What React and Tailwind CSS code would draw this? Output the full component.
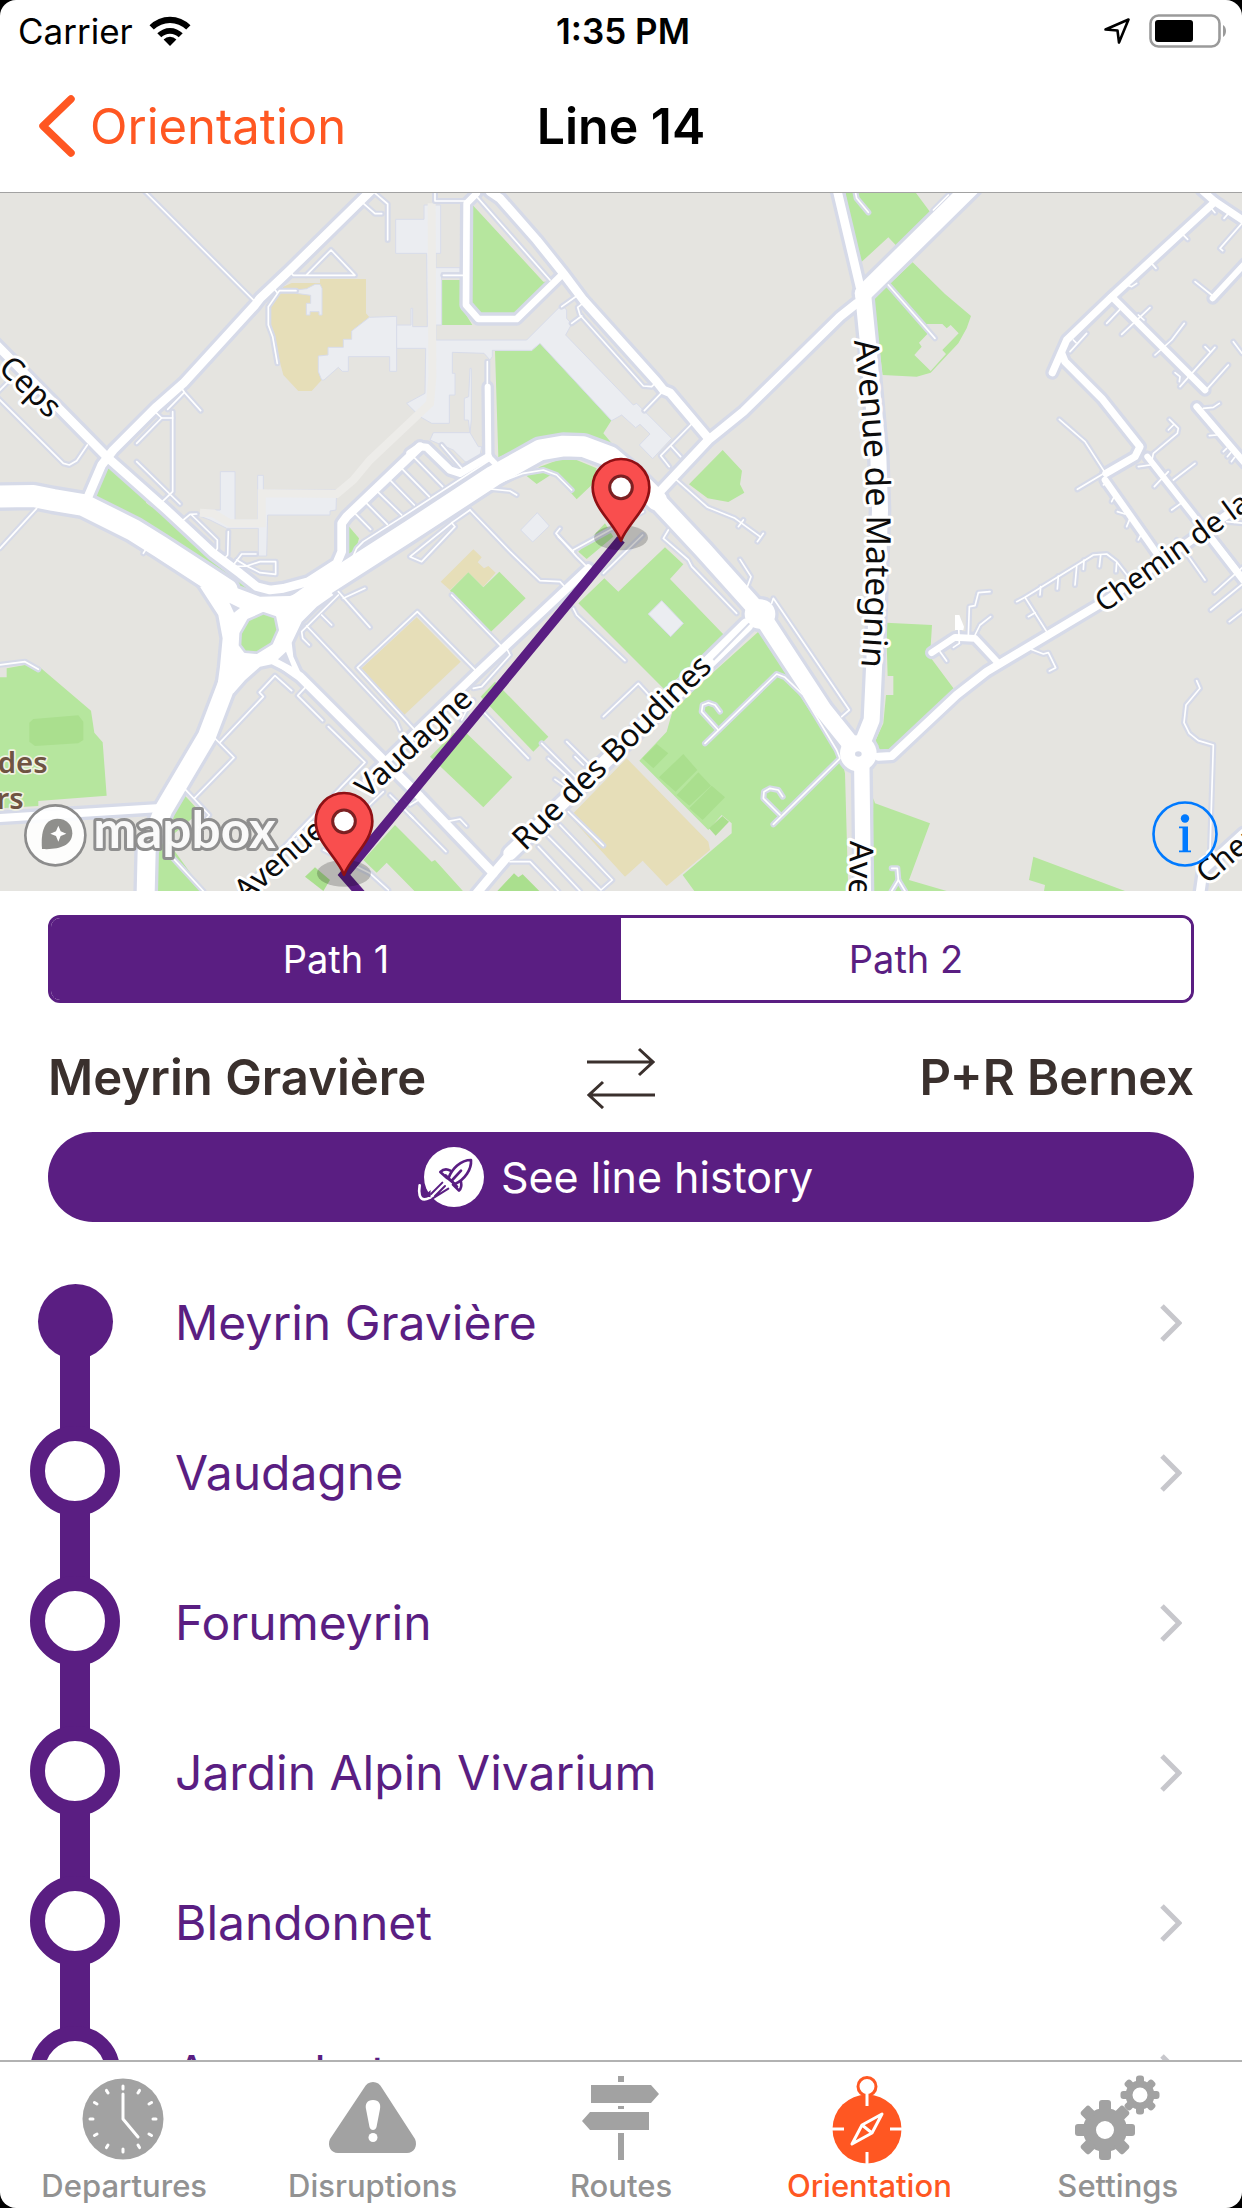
import React, { useState } from "react";

const PURPLE = "#5a1e82";

/* Map sectors: each has its own origin; coordinates inside are local to it.
   Roads are [width, points]; thin service roads are plain point strings. */
const SECTORS = [
  {
    at: [0, 0],
    sand: ["850,290 875,279 960,279 960,267 1098,267 1098,370 1108,382 1055,423 1055,448 1030,448 1030,472 984,472 984,495 955,498 955,545 965,570 935,603 895,603 850,555 830,480 813,420 813,350 840,310"],
    green: [
      "335,827 352,832 445,920 438,938 456,952 468,945 605,1085 700,1165 780,1215 690,1185 620,1145 530,1075 282,922 315,840",
      "1043,1005 1077,1045 1060,1110 1030,1130",
    ],
    building: [
      "1190,379 1108,382 1055,423 1055,448 1030,448 1030,472 984,472 984,495 955,498 955,545 965,570 972,570 1015,532 1027,544 1045,544 1045,500 1169,500 1169,544 1190,544",
      "888,300 920,296 945,283 960,283 966,295 966,375 957,375 957,365 930,365 930,375 919,375 919,340 932,340 932,316 888,310",
      "661,845 705,845 705,990 773,990 773,856 790,856 790,900 1010,900 1008,960 990,963 990,975 803,975 800,1098 775,1098 775,1015 680,1015 630,990 590,975 620,960 661,960",
    ],
    roads: [
      [66, "-20,920 100,918 160,930 250,945 400,1020 480,1070 680,1200"],
      [26, "1115,0 870,240 780,325 765,345 550,580 470,650 340,780 305,825 260,930"],
      [26, "-20,455 320,800 500,960 640,1090 720,1150 770,1190 810,1200 850,1195 925,1175 1010,1120 1025,1085 1025,1000 1040,980 1260,770"],
    ],
    lanes: [
      "435,5 765,335", "1120,5 1163,42 1163,150", "1090,40 1125,71 1145,71", "870,245 880,256 1065,256 993,180 918,256",
      "888,302 838,302 805,350 805,405 818,440 832,520", "820,293 832,308", "545,595 553,607 602,662", "553,607 503,658",
      "465,665 485,684 518,684", "485,684 410,760", "518,665 518,905 487,935", "410,815 540,942",
      "-5,625 190,820 208,825 230,812 262,765", "-5,605 25,575", "0,1075 110,955", "550,990 570,973 590,972",
      "575,975 652,1050 652,1075 640,1095", "685,1025 683,1095 665,1115", "1065,970 1112,1018", "1100,940 1162,1003",
      "1135,907 1205,975", "1170,870 1243,945", "1205,835 1288,920", "1240,800 1328,890",
      "1050,1120 1070,1075 1090,1055 1200,985 1470,810",
    ],
  },
  {
    at: [1230, 0],
    green: [
      "185,42 400,275 410,275 325,375 200,375 182,350",
      "95,270 150,270 150,345 187,405 95,405",
      "255,483 365,483 390,460 605,690 580,730 607,762 520,735 460,730 385,750 265,802",
      "390,830 450,808 500,810 560,835 545,885 500,928 430,850 380,882 350,858",
      "837,883 938,780 996,842 990,883 1003,908 955,936 893,925",
      "505,1085 530,1107 610,1040 585,1000",
    ],
    building: [
      "42,45 92,45 92,190 78,190 78,233 150,233 150,248 95,248 95,405 78,405 78,450 350,450 455,345 470,360 470,385 485,402 467,435 670,645 680,640 785,745 728,806 688,765 720,732 690,703 677,713 635,675 605,692 390,460 365,481 247,481 247,500 240,510 222,490 127,487 127,550 135,550 135,615 118,615 118,700 65,700 30,680 -10,640 45,610 47,475 -40,475 -40,405 3,405 3,355 8,355 8,410 52,410 50,190 -43,190 -43,88 42,88",
      "70,728 180,728 205,770 215,770 210,795 185,820 165,815 130,780 60,750",
      "180,535 184,535 184,690 180,728 175,690 163,690 163,625 176,620",
      "332,1020 382,968 418,1008 368,1056",
    ],
    roads: [
      [62, "-360,1260 -270,1195 0,1022 250,858 390,780 460,768 520,770 600,800 660,850 740,930"],
      [52, "640,830 740,930 880,1080 1050,1270 1240,1560 1345,1690"],
      [20, "200,10 170,40 168,345 205,387 320,387 455,255"],
      [26, "240,5 270,25 380,150 460,250 520,330 740,575 760,600 780,608 895,745"],
      [26, "1340,340 1290,380 1000,665 895,750 745,910"],
      [18, "233,590 235,800 260,825"],
      [22, "0,790 30,770 50,772 120,840 150,850 235,800"],
    ],
    lanes: [
      "75,5 75,33 165,33", "100,256 160,256", "200,20 420,270", "455,350 500,318", "525,335 503,352 510,375 700,588 725,590 740,575",
      "485,400 515,378", "755,608 703,662", "845,702 752,797 778,830", "783,768 812,800", "232,515 232,590", "95,765 160,840",
      "235,890 340,850 400,840 440,855 485,900", "240,897 300,903 320,915", "798,868 893,952 975,985 1050,1040", "1060,1030 1042,1055",
      "1000,990 985,1010", "180,960 300,1085 390,1172 450,1175 462,1188", "180,960 130,995 0,1100 35,1115 135,1010 125,998",
      "450,1015 438,1030 500,1100 530,1130", "700,965 490,1080", "698,1035 580,1150", "775,1020 760,1045 835,1110 845,1130 980,1270",
    ],
  },
  {
    at: [2460, 0],
    green: [
      "75,5 285,5 332,68 230,168 205,142 120,220",
      "278,217 375,312 453,378 440,415 415,460 332,548 290,560 188,555 160,330 200,290",
    ],
    cut: ["320,402 367,402 380,415 392,405 416,430 367,480 378,492 332,543 283,495 305,470 297,458 322,432"],
    roads: [
      [52, "455,-10 130,310"],
      [26, "50,-5 120,290"],
      [48, "130,320 145,470 175,800 180,960 170,1260 155,1590 115,1690"],
      [46, "125,1700 130,2110"],
      [22, "1145,0 1185,35 1275,95"],
      [22, "1185,35 870,325 740,450 697,548"],
      [22, "725,490 735,515 845,625 960,770 945,800 858,850"],
      [20, "855,870 1010,1090"],
      [20, "875,320 1155,600"],
      [20, "1130,650 1275,820"],
      [18, "982,800 1280,1180"],
      [18, "1275,220 1178,325"],
    ],
    lanes: [
      "860,400 900,358", "905,433 990,353", "955,375 972,390", "1005,495 1055,450 1093,400", "1080,590 1185,472", "1155,470 1170,485",
      "1065,548 1080,560 1078,575", "1160,598 1225,525", "990,215 1008,235", "1085,130 1103,148", "920,285 935,290 950,280",
      "1170,50 1185,68", "1212,85 1225,70", "1270,95 1200,175 1208,182", "1125,275 1175,315", "750,485 800,430", "760,450 768,458",
      "718,688 795,755 855,848 772,898", "1240,455 1266,490", "1150,655 1180,652 1198,640", "1168,737 1190,735",
      "1048,688 1075,715 1072,730 1000,790 997,805", "1045,720 1060,705", "955,830 990,825", "1003,890 1045,845", "1060,870 1125,820",
      "1055,960 1090,935", "850,885 860,880", "875,935 885,915", "892,965 915,972", "920,1010 930,985", "955,1050 965,1030",
      "1210,785 1220,775", "1222,800 1232,788", "1234,815 1244,802", "1220,995 1270,1000", "105,0 110,25 145,67", "340,60 385,15", "205,285 345,445",
    ],
  },
  {
    at: [0, 1050],
    sand: ["1250,232 1382,365 1210,527 1085,385"],
    green: [
      "-5,412 20,412 20,385 75,375 118,380 273,512 283,578 308,607 320,767 115,783 115,798 -5,805",
      "550,762 600,815 500,900 615,1060 460,1060 455,950 510,850",
      "1185,855 1295,965 1305,960 1395,1060 1250,1060 1160,968 1130,998 1090,960",
    ],
    dark: [
      "100,537 235,526 250,545 250,600 235,610 105,618 88,605 88,548",
      "945,982 990,1020 970,1053 915,1010",
    ],
    junction: "600,140 700,140 780,170 870,168 970,130 1000,165 950,200 905,245 875,308 880,350 905,405 890,410 815,373 780,380 735,420 700,460 650,455 660,380 668,295 655,225",
    roads: [
      [54, "685,420 620,590 490,810 440,930 437,1060"],
      [24, "-20,835 470,805"],
      [26, "850,375 900,410 1260,770 1480,1000"],
    ],
    lanes: [
      "-5,375 75,365 115,388", "430,40 440,25", "700,75 725,42 768,42", "690,80 740,78 780,65 827,65 827,103 780,98 740,78 710,60",
      "1015,155 1110,262", "1030,175 1095,145", "1015,165 905,275 908,295 928,315", "965,225 995,255", "920,258 1190,545 1200,570",
      "1430,395 1252,215 1072,383 1240,565", "875,452 825,407 778,457 790,470 660,607", "635,585 702,653 583,775", "553,745 628,825 590,870",
      "918,440 893,467 968,542", "985,560 1095,667 880,890", "1150,755 1050,850", "720,1055 940,830", "890,895 770,1010",
      "1170,765 1240,835", "515,950 610,1053", "970,930 1110,1000 1165,1050",
    ],
  },
  {
    at: [1230, 1050],
    sand: [
      "92,125 190,28 215,52 203,67 222,85 235,78 257,98 220,140 175,97 120,150",
      "650,655 895,905 900,930 770,1038 698,962 645,1010 480,830",
    ],
    green: [
      "120,152 175,97 220,142 268,95 347,175 243,275",
      "212,470 255,425 415,590 370,635",
      "60,650 130,580 165,575 307,712 220,802",
      "505,190 583,115 625,155 765,22 820,73 780,117 942,285 765,450",
      "1045,275 1130,400 1290,640 1305,700 1315,1060 858,1060 818,1005 965,880 965,850 935,825 895,870 688,662 770,575 790,505",
    ],
    dark: [
      "740,612 775,640 730,685 697,655", "820,642 862,690 797,755 747,712", "865,697 903,737 838,797 800,765",
      "905,737 945,772 878,840 838,805", "937,828 957,845 917,887 897,865", "312,1000 325,1012 338,1003 388,1053 262,1053",
    ],
    building: ["755,182 820,250 782,290 715,222"],
    roads: [
      [24, "535,85 200,400 -130,720"],
      [40, "1010,255 790,470 560,690 300,940"],
      [26, "310,930 250,1000 200,1060"],
      [88, "1048,222 1052,222"],
      [104, "1342,1690 1344,1690"],
    ],
    lanes: [
      "125,165 275,320", "490,205 500,225 645,362", "580,530 685,430 740,490", "470,605 545,680", "495,650 520,675", "395,610 500,715",
      "415,655 480,715", "435,718 480,750", "215,510 355,655", "155,540 175,500 190,480", "190,445 215,440 300,345 290,325", "0,795 25,780",
      "0,825 108,935", "110,845 150,837 170,858", "475,815 580,917", "450,855 607,1020 573,1050 415,890", "385,920 510,1053",
      "300,965 360,965 445,1053", "1085,190 1090,175 1318,510 1295,530", "990,58 1023,110 1012,140",
      "885,610 1100,402 1125,412 1180,465 1280,630 1290,655 1090,853", "925,570 875,515 878,495 895,488 915,495 930,515",
      "1110,825 1060,775 1062,755 1080,745 1105,750 1118,770", "490,35 445,-10",
    ],
  },
  {
    at: [2460, 1050],
    green: [
      "198,248 336,255 330,350 402,447 205,635 180,630 165,605 190,550 198,465 220,465 220,408 203,408",
      "160,775 165,790 330,850 267,1020 380,1053 155,1053",
      "640,950 915,1053 672,1053 675,1035 627,1020",
    ],
    roads: [
      [108, "114,640 116,640"],
      [24, "175,650 215,648 410,465 500,395 860,180 1270,-110"],
      [20, "335,338 405,292 465,295 535,370"],
      [22, "1170,-10 1270,120"],
      [26, "1140,1060 1150,990 1270,880"],
    ],
    lanes: [
      "445,285 448,200 465,197 475,158 510,155", "465,285 480,255 512,230", "360,335 380,363", "400,322 418,310 415,240", "590,185 615,172 820,45 860,42 890,65 925,110",
      "615,172 680,275", "625,230 645,218", "660,165 662,140", "712,147 715,108", "765,135 770,80", "790,88 792,60", "838,80 842,45",
      "888,95 890,68", "625,325 670,342 685,338 707,383 688,393", "1130,422 1140,445 1098,495 1092,548 1108,580 1135,602 1180,615 1170,930",
      "1070,0 1155,120", "1183,158 1270,80", "1172,210 1270,130", "1228,245 1270,212", "215,985 232,985 235,1020 215,1053", "235,1020 255,1053",
    ],
  },
];

function Layer({ draw }) {
  return SECTORS.map((s, i) => (
    <g key={i} transform={`translate(${s.at[0]} ${s.at[1]})`}>{draw(s)}</g>
  ));
}

const polys = (list, props) => (list || []).map((p) => <polygon key={p} points={p} {...props} />);
const lines = (list, width) => (list || []).map((p) => <polyline key={p} points={p} strokeWidth={width} />);

const LABELS = [
  { id: "mategnin", d: "M2562,452 Q2628,960 2578,1500", text: "Avenue de Mategnin", size: 101 },
  { id: "ave", d: "M2550,1952 L2542,2400", text: "Avenue", size: 98 },
  { id: "boudines", d: "M1575,1985 L1985,1586 L2160,1415", text: "Rue des Boudines", size: 94 },
  { id: "vaudagne", d: "M736,2138 L1120,1812 L1460,1500", text: "Avenue de Vaudagne", size: 92 },
  { id: "chemin", d: "M3312,1270 L3587,1075 L3900,846", text: "Chemin de la", size: 89 },
  { id: "chene", d: "M3622,2085 L3900,1850", text: "Chemin", size: 92 },
  { id: "ceps", d: "M-8,538 L300,838", text: "Ceps", size: 94 },
];

function Pin({ x, y }) {
  return (
    <g transform={`translate(${x} ${y})`}>
      <path d="M0,160 C-22,105 -85,62 -85,0 A85,85 0 0 1 85,0 C85,62 22,105 0,160 Z" fill="#f94e4e" stroke="#8f1014" strokeWidth="8" strokeLinejoin="round" />
      <circle r="34" fill="#fff" stroke="#7c2022" strokeWidth="9" />
    </g>
  );
}

function MapView() {
  return (
    <section aria-label="Map" className="relative border-t border-[#a2a2a2]">
      <svg viewBox="0 9 3726 2094" className="block h-auto w-full">
        <rect width="3726" height="2110" fill="#e5e4e0" />
        <Layer draw={(s) => (
          <>
            {polys(s.sand, { fill: "#e6deb8" })}
            {polys(s.green, { fill: "#b6e69e" })}
            {polys(s.dark, { fill: "#aadf8e" })}
            {polys(s.cut, { fill: "#e5e4e0" })}
          </>
        )} />
        <Layer draw={(s) => polys(s.building, { fill: "#ebedf1", stroke: "#d8dcea", strokeWidth: 3 })} />
        <polyline points="600,968 640,970 690,1000 785,1000 785,910 1010,912 1060,870 1110,810 1290,640 1297,560 1295,40" fill="none" stroke="#edece9" strokeWidth="24" />
        <g fill="none" stroke="#d6dae8" strokeLinecap="round" strokeLinejoin="round">
          <Layer draw={(s) => lines(s.lanes, 18)} />
          <Layer draw={(s) => (
            <>
              {s.junction && <polygon points={s.junction} strokeWidth="20" />}
              {s.roads.map(([w, p]) => <polyline key={p} points={p} strokeWidth={w + 20} />)}
            </>
          )} />
        </g>
        <g fill="none" stroke="#fff" strokeLinecap="round" strokeLinejoin="round">
          <Layer draw={(s) => lines(s.lanes, 5)} />
          <Layer draw={(s) => (
            <>
              {s.junction && <polygon points={s.junction} fill="#fff" stroke="none" />}
              {s.roads.map(([w, p]) => <polyline key={p} points={p} strokeWidth={w} />)}
            </>
          )} />
        </g>
        <g fill="#d6dae8">
          <polygon points="790,1270 825,1282 833,1320 815,1360 770,1388 735,1385 720,1365 722,1330 745,1290" fill="#b6e69e" stroke="#d6dae8" strokeWidth="8" strokeLinejoin="round" />
          <polygon points="688,1238 720,1254 702,1268" />
          <polygon points="858,1385 876,1430 834,1408" />
          <ellipse cx="2575" cy="1692" rx="10" ry="8" />
          <polyline points="2248,1300 2140,1410" fill="none" stroke="#d6dae8" strokeWidth="6" />
          <polygon points="2865,1275 2878,1275 2892,1310 2890,1320 2865,1320" fill="#fff" />
        </g>

        <g fontFamily="'Noto Sans', sans-serif" fill="#0c0c0c" stroke="#fff" strokeWidth="18" strokeLinejoin="round" paintOrder="stroke">
          {LABELS.map((l) => (
            <React.Fragment key={l.id}>
              <path id={l.id} d={l.d} fill="none" stroke="none" />
              <text fontSize={l.size}><textPath href={`#${l.id}`}>{l.text}</textPath></text>
            </React.Fragment>
          ))}
        </g>
        <g fontFamily="'Noto Sans', sans-serif" fontSize="88" fontWeight="600" fill="#6f5442" stroke="#f1f3e4" strokeWidth="10" strokeLinejoin="round" paintOrder="stroke" textAnchor="end">
          <text x="143" y="1748">des</text>
          <text x="71" y="1858">rs</text>
        </g>

        <polyline points="1863,1048 1032,2055 1085,2115" fill="none" stroke={PURPLE} strokeWidth="29" />
        <g fill="#000" opacity="0.2">
          <ellipse cx="1863" cy="1043" rx="81" ry="38" />
          <ellipse cx="1032" cy="2050" rx="81" ry="40" />
        </g>
        <Pin x={1863} y={892} />
        <Pin x={1032} y={1894} />

        <g aria-label="mapbox">
          <circle cx="166" cy="1936" r="90" fill="#fff" fillOpacity="0.9" stroke="#8c8c8c" strokeWidth="8" />
          <path d="M126,1977 C122,1925 132,1888 172,1886 C200,1886 217,1905 217,1930 C216,1968 175,1980 126,1977 Z" fill="#8f8f8c" />
          <path d="M175,1907 L182,1924 L199,1931 L182,1938 L175,1955 L168,1938 L151,1931 L168,1924 Z" fill="#fff" />
          <text x="280" y="1974" fontFamily="Lato, sans-serif" fontWeight="700" fontSize="154" fill="#fff" fillOpacity="0.95" stroke="#8f8f8f" strokeWidth="18" strokeLinejoin="round" paintOrder="stroke">mapbox</text>
        </g>
      </svg>
      <button type="button" aria-label="Map information" className="absolute right-6 bottom-6 size-[66px]">
        <svg viewBox="0 0 66 66" className="size-full" fill="#007aff">
          <circle cx="33" cy="33" r="31.5" fill="none" stroke="#007aff" strokeWidth="2.6" />
          <circle cx="33" cy="17.500" r="4.200" />
          <path d="M27,25.500h9v24h3v1.800H27v-1.800h3.500V27.300H27z" />
        </svg>
      </button>
    </section>
  );
}

function StatusBar() {
  return (
    <div className="grid h-[60px] grid-cols-3 items-center pt-0.5 pr-[14px] pl-[18px] text-[35px] leading-none">
      <div className="flex items-center gap-4">
        <span>Carrier</span>
        <svg viewBox="0 0 42 30" className="h-[30px] w-[42px]">
          <path d="M21 30l-6.400-6.500a9 9 0 0 1 12.800 0z" />
          <path d="M8.300 17.300a18 18 0 0 1 25.400 0l-4 4a12.300 12.300 0 0 0-17.400 0z" />
          <path d="M0.500 9.300a29 29 0 0 1 41 0l-4.300 4.300a23 23 0 0 0-32.400 0z" />
        </svg>
      </div>
      <span className="text-center font-semibold">1:35 PM</span>
      <div className="flex items-center justify-end gap-[18px]">
        <svg viewBox="0 0 28 28" className="size-7" fill="none" stroke="#000" strokeWidth="2.600" strokeLinejoin="round">
          <path d="M25.500 2.500L16 25.500L14.500 13.500L2.500 12.500Z" />
        </svg>
        <svg viewBox="0 0 79 34" className="h-[34px] w-[79px]">
          <rect x="1.500" y="1.500" width="69" height="31" rx="8" fill="none" stroke="#9a9a9a" strokeWidth="2.600" />
          <rect x="6" y="6" width="38" height="22" rx="3" />
          <path d="M74 11c4 2 4 10 0 12z" fill="#9a9a9a" />
        </svg>
      </div>
    </div>
  );
}

function NavBar() {
  return (
    <header className="grid h-[132px] grid-cols-3 items-center px-9">
      <a href="#orientation" className="flex items-center gap-[14px] text-[49px] leading-none text-[#ff5722]">
        <svg viewBox="0 0 40 64" className="h-16 w-10" fill="none" stroke="currentColor" strokeWidth="7.500" strokeLinecap="round" strokeLinejoin="round">
          <path d="M35 5L7 32l28 27" />
        </svg>
        Orientation
      </a>
      <h1 className="text-center text-[50px] leading-none font-semibold">Line 14</h1>
    </header>
  );
}

function HistoryIcon() {
  return (
    <svg viewBox="54 78 204 186" className="h-[62px] w-[68px]" fill="none" strokeLinecap="round" strokeLinejoin="round">
      <circle cx="165" cy="171" r="90" fill="#fff" />
      <path d="M62 196C58 220 62 238 76 238C90 238 98 226 108 232" stroke="#fff" strokeWidth="8" />
      <path d="M72 196C70 215 76 224 84 220L95 210L94 232L76 228Z" fill={PURPLE} stroke="none" />
      <g stroke={PURPLE} strokeWidth="8">
        <path d="M148 176C158 146 186 120 216 120C218 148 198 178 168 192Z" />
        <path d="M154 152C144 146 132 148 124 156L144 174" />
        <path d="M186 186C188 196 188 204 180 212L162 194" />
        <path d="M140 166L174 200M160 180L186 152" />
        <path d="M130 188L96 222M148 206L100 236M138 198L108 228" strokeWidth="6" />
      </g>
    </svg>
  );
}

function Stop({ name, first }) {
  return (
    <li className="h-[150px] shrink-0">
      <a href="#stop" className="flex h-full items-center pr-[60px] pl-[30px] text-[48px] text-[#5a1e82]">
        <span className="mr-[55px] flex h-full w-[90px] flex-col items-center">
          <span className={first ? "w-[30px] flex-1" : "w-[30px] flex-1 bg-[#5a1e82]"} />
          {first ? (
            <span className="-my-1 size-[75px] rounded-full bg-[#5a1e82]" />
          ) : (
            <span className="-my-1 size-[90px] rounded-full border-[15px] border-[#5a1e82] bg-white" />
          )}
          <span className="w-[30px] flex-1 bg-[#5a1e82]" />
        </span>
        <span className="flex flex-1 items-center justify-between pt-[3px] leading-[60px]">
          {name}
          <svg viewBox="0 0 22 38" className="h-[38px] w-[22px]" fill="none" stroke="#c7c7cc" strokeWidth="5">
            <path d="M2 2l17 17L2 36" />
          </svg>
        </span>
      </a>
    </li>
  );
}

function Gear({ x, y, body, reach, tooth, hole }) {
  return (
    <g transform={`translate(${x} ${y})`}>
      <circle r={(body + hole) / 2} fill="none" stroke="currentColor" strokeWidth={body - hole} />
      {[0, 45, 90, 135, 180, 225, 270, 315].map((a) => (
        <rect key={a} x={-tooth / 2} y={-reach} width={tooth} height={reach - body + 4} rx="3" transform={`rotate(${a})`} fill="currentColor" />
      ))}
    </g>
  );
}

const TABS = [
  {
    name: "Departures",
    icon: (
      <>
        <circle cx="47" cy="47" r="40.500" fill="currentColor" />
        <g stroke="#fff" strokeWidth="3" strokeLinecap="round" fill="none">
          {Array.from({ length: 12 }, (_, i) => (
            <path key={i} d="M47 14v3" transform={`rotate(${i * 30} 47 47)`} />
          ))}
          <path d="M47 22v25l15 18" strokeLinejoin="round" />
        </g>
      </>
    ),
  },
  {
    name: "Disruptions",
    icon: (
      <>
        <path d="M48 10c4 0 7 2 9 6l33 51c3 7-1 14-8 14H13c-7 0-11-7-8-14l34-51c2-4 5-6 9-6z" fill="currentColor" />
        <path d="M48 28c6 0 8 4 7 9l-3.500 18c-1 4-6 4-7 0L41 37c-1-5 1-9 7-9z" fill="#fff" />
        <circle cx="48" cy="65.500" r="4.500" fill="#fff" />
      </>
    ),
  },
  {
    name: "Routes",
    icon: (
      <g fill="currentColor">
        <path d="M45 4h6v6h-6zM45 34h6v3h-6zM45 61h6v27h-6z" />
        <path d="M18 13h60l8 9-8 9H18zM17 40h59v18H17l-8-9z" />
      </g>
    ),
  },
  {
    name: "Orientation",
    active: true,
    icon: (
      <>
        <circle cx="46" cy="57" r="34.500" fill="currentColor" />
        <circle cx="46" cy="14.500" r="9" fill="#fff" stroke="currentColor" strokeWidth="3" />
        <g fill="none" stroke="#fff" strokeWidth="3">
          <path d="M46 21v13M46 80v12M11 57h12M69 57h12" />
          <path d="M61 42L51 61L31 72L41 53ZM41 53l10 8" strokeLinejoin="round" />
        </g>
      </>
    ),
  },
  {
    name: "Settings",
    icon: (
      <>
        <Gear x={35} y={58} body={22} reach={30} tooth={12} hole={9} />
        <Gear x={70} y={23} body={14.5} reach={19.500} tooth={8} hole={7.5} />
      </>
    ),
  },
];

export default function App() {
  const [path, setPath] = useState(0);
  const stops = ["Meyrin Gravière", "Vaudagne", "Forumeyrin", "Jardin Alpin Vivarium", "Blandonnet", "Avanchet"];
  return (
    <div className="h-screen bg-black">
      <div className="flex h-full flex-col overflow-hidden rounded-[16px] bg-white font-['Inter',sans-serif] text-black">
        <StatusBar />
        <NavBar />
        <MapView />
        <section className="px-12 pt-6">
          <div className="grid h-[88px] grid-cols-2 overflow-hidden rounded-[12px] border-[3px] border-[#5a1e82]">
            {["Path 1", "Path 2"].map((label, i) => (
              <button
                key={label}
                type="button"
                aria-pressed={path === i}
                onClick={() => setPath(i)}
                className={path === i ? "bg-[#5a1e82] text-[38px] leading-none text-white" : "bg-white text-[38px] leading-none text-[#5a1e82]"}
              >
                {label}
              </button>
            ))}
          </div>
          <div className="mt-9 mb-4 grid h-[77px] grid-cols-[1fr_68px_1fr] items-center text-[49px] leading-none font-semibold text-[#3a302d]">
            <span>Meyrin Gravière</span>
            <svg viewBox="0 0 68 62" className="h-[62px] w-[68px]" fill="none" stroke="currentColor" strokeWidth="3">
              <path d="M0 15h65M52 2l14 13-14 13M68 48H3M16 35L2 48l14 13" />
            </svg>
            <span className="text-right">P+R Bernex</span>
          </div>
          <button type="button" className="flex h-[90px] w-full items-center justify-center gap-4 rounded-full bg-[#5a1e82] pr-3 text-[43px] leading-none text-white">
            <HistoryIcon />
            See line history
          </button>
        </section>
        <ul className="mt-6 flex min-h-0 flex-1 flex-col overflow-hidden">
          {stops.map((name, i) => <Stop key={name} name={name} first={i === 0} />)}
        </ul>
        <nav className="grid h-[148px] shrink-0 grid-cols-5 border-t-2 border-[#b2b2b2]">
          {TABS.map((tab) => (
            <a
              key={tab.name}
              href="#tab"
              aria-current={tab.active ? "page" : undefined}
              className={tab.active ? "flex flex-col items-center pt-[10px] text-[#ff5722]" : "flex flex-col items-center pt-[10px] text-[#a2a2a2]"}
            >
              <svg viewBox="0 0 96 96" className="size-24">{tab.icon}</svg>
              <span className={tab.active ? "text-[31px] leading-9 font-medium" : "text-[31px] leading-9 font-medium text-[#929292]"}>{tab.name}</span>
            </a>
          ))}
        </nav>
      </div>
    </div>
  );
}
